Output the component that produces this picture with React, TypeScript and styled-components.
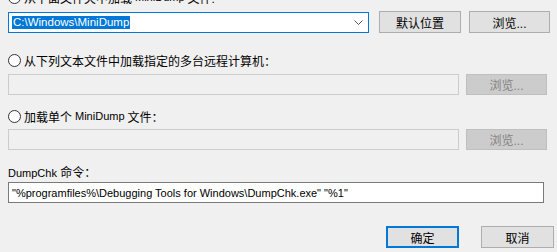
import styled, { createGlobalStyle } from 'styled-components';

const GlobalStyle = createGlobalStyle`
  html, body {
    margin: 0;
    padding: 0;
    background: #f0f0f0;
  }
  body {
    width: 557px;
    height: 252px;
    overflow: hidden;
    font-family: "Liberation Sans", "Noto Sans CJK SC", sans-serif;
    font-size: 12px;
    color: #000;
  }
`;

const Dialog = styled.div`
  display: flex;
  flex-direction: column;
  margin-top: -11px;
  padding: 0 0 0 8px;
`;

const RadioRow = styled.label<{ $top: number }>`
  display: flex;
  align-items: center;
  gap: 3px;
  height: 16px;
  margin-top: ${(p) => p.$top}px;
  white-space: nowrap;
`;

const RadioCircle = styled.span`
  width: 11px;
  height: 11px;
  border: 1px solid #333;
  border-radius: 50%;
  background: #fff;
  flex: none;
`;

// latin runs render a touch narrower than the CJK glyphs next to them
const Latin = styled.span<{ $size?: number }>`
  font-size: ${(p) => p.$size ?? 11}px;
`;

const Row = styled.div<{ $top: number; $gap: number }>`
  display: flex;
  align-items: center;
  gap: ${(p) => p.$gap}px;
  margin-top: ${(p) => p.$top}px;
`;

const Combo = styled.div`
  box-sizing: border-box;
  width: 361px;
  height: 21px;
  border: 1px solid #0078d7;
  background: #fff;
  display: flex;
  align-items: center;
  padding: 0 3px 0 3px;
`;

const Selected = styled.span`
  background: #0078d7;
  color: #fff;
  line-height: 13px;
  height: 13px;
  padding: 0 1px;
  font-size: 11.5px;
`;

const Chevron = styled.svg`
  margin-left: auto;
  margin-right: 2px;
`;

const Field = styled.div<{ $width: number; $disabled?: boolean }>`
  box-sizing: border-box;
  width: ${(p) => p.$width}px;
  height: 21px;
  border: 1px solid ${(p) => (p.$disabled ? '#cccccc' : '#7a7a7a')};
  background: ${(p) => (p.$disabled ? '#f0f0f0' : '#fff')};
  display: flex;
  align-items: center;
  padding: 0 3px;
  white-space: nowrap;
  overflow: hidden;
`;

const Button = styled.div<{ $width: number; $disabled?: boolean; $default?: boolean }>`
  box-sizing: border-box;
  width: ${(p) => p.$width}px;
  height: ${(p) => (p.$disabled ? 21 : 22)}px;
  display: flex;
  align-items: center;
  justify-content: center;
  background: ${(p) => (p.$disabled ? '#cccccc' : '#e1e1e1')};
  border: ${(p) =>
    p.$default ? '2px solid #0078d7' : p.$disabled ? '1px solid #bfbfbf' : '1px solid #adadad'};
  color: ${(p) => (p.$disabled ? '#838383' : '#000')};
  flex: none;
`;

const Label = styled.div`
  height: 16px;
  line-height: 16px;
  margin-top: 15px;
`;

const Footer = styled.div`
  display: flex;
  justify-content: flex-end;
  gap: 22px;
  margin-top: 23px;
  padding-right: 3px;
`;

function App(): JSX.Element {
  return (
    <>
      <GlobalStyle />
      <Dialog>
        <RadioRow $top={0}>
          <RadioCircle />
          从下面文件夹中加载 <Latin>MiniDump</Latin> 文件:
        </RadioRow>
        <Row $top={6} $gap={10}>
          <Combo>
            <Selected>C:\Windows\MiniDump</Selected>
            <Chevron width="9" height="5" viewBox="0 0 9 5">
              <polyline points="0.5,0.5 4.5,4.5 8.5,0.5" fill="none" stroke="#555" strokeWidth="1" />
            </Chevron>
          </Combo>
          <Button $width={82}>默认位置</Button>
          <Button $width={81} style={{ marginLeft: -2 }}>浏览...</Button>
        </Row>

        <RadioRow $top={19}>
          <RadioCircle />
          从下列文本文件中加载指定的多台远程计算机：
        </RadioRow>
        <Row $top={6} $gap={7}>
          <Field $width={451} $disabled />
          <Button $width={81} $disabled>浏览...</Button>
        </Row>

        <RadioRow $top={13}>
          <RadioCircle />
          加载单个 <Latin>MiniDump</Latin> 文件：
        </RadioRow>
        <Row $top={5} $gap={7}>
          <Field $width={451} $disabled />
          <Button $width={81} $disabled>浏览...</Button>
        </Row>

        <Label>
          <Latin>DumpChk</Latin> 命令：
        </Label>
        <Row $top={1} $gap={0}>
          <Field $width={536}>
            <Latin>"%programfiles%\Debugging Tools for Windows\DumpChk.exe" "%1"</Latin>
          </Field>
        </Row>

        <Footer>
          <Button $width={73} $default>确定</Button>
          <Button $width={73}>取消</Button>
        </Footer>
      </Dialog>
    </>
  );
}

export default App;
